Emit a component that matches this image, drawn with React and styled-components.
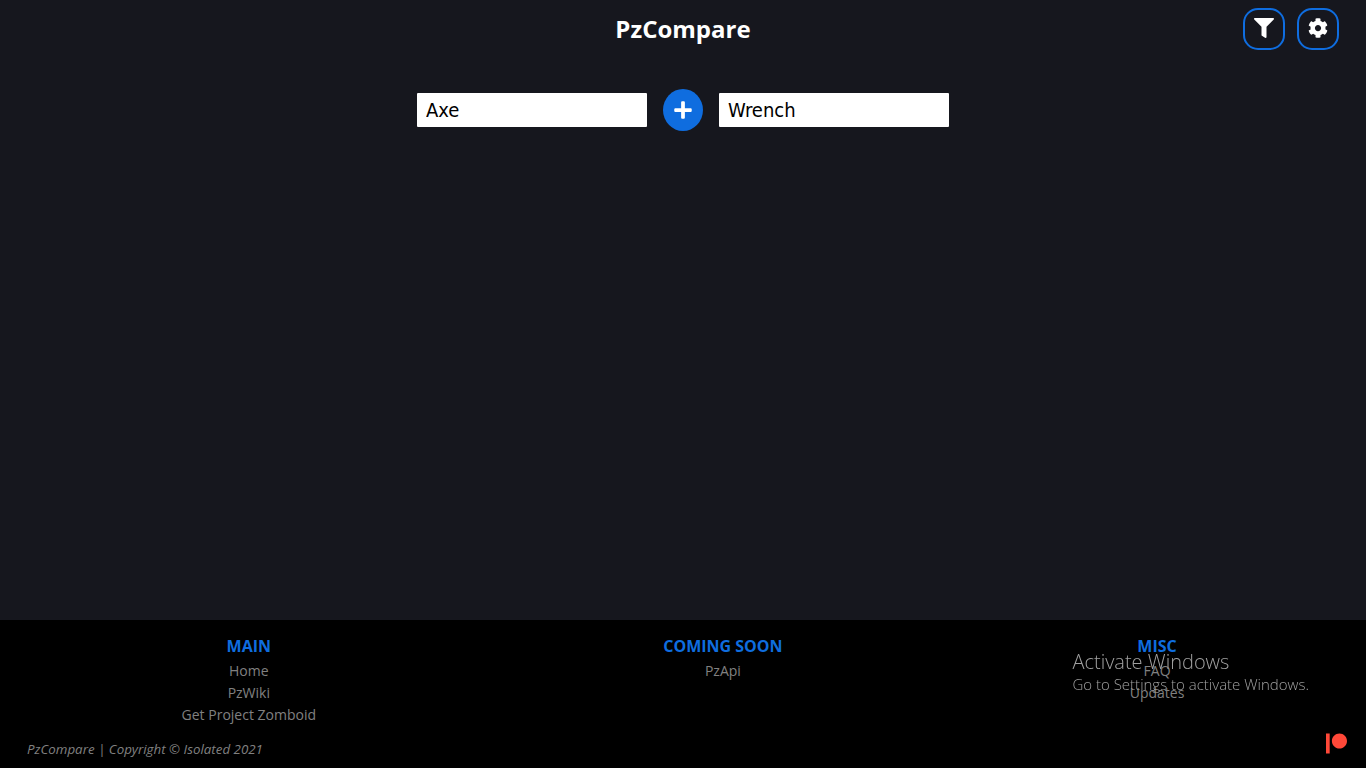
import React from "react";
import styled, { createGlobalStyle } from "styled-components";
import { FaFilter, FaCog, FaPlus, FaPatreon } from "react-icons/fa";

const GlobalStyle = createGlobalStyle`
  *, *::before, *::after { box-sizing: border-box; }
  body {
    margin: 0;
    background: #16171e;
    color: #fff;
    font-family: "Open Sans", "Noto Sans", sans-serif;
  }
`;

const Page = styled.div`
  min-height: 100vh;
  display: flex;
  flex-direction: column;
`;

const Header = styled.header`
  display: grid;
  grid-template-columns: 1fr auto 1fr;
  align-items: center;
  padding: 8px 27px;
`;

const Title = styled.h1`
  grid-column: 2;
  margin: 0;
  font-size: 24px;
  line-height: 34px;
  font-weight: 700;
`;

const Actions = styled.div`
  justify-self: end;
  display: flex;
  gap: 12px;
`;

const IconButton = styled.button`
  width: 42px;
  height: 42px;
  padding: 0 0 2px;
  display: flex;
  align-items: center;
  justify-content: center;
  border: 2px solid #0f6ddf;
  border-radius: 15px;
  background: transparent;
  color: #fff;
  font-size: 20px;
  cursor: pointer;
`;

const Main = styled.main`
  flex: 1;
  padding-top: 31px;
`;

const CompareForm = styled.form`
  display: flex;
  justify-content: center;
  align-items: center;
  gap: 16px;
`;

const ItemInput = styled.input`
  width: 230px;
  height: 34px;
  padding: 0 9px;
  border: 0;
  border-radius: 1px;
  background: #fff;
  color: #000;
  font-family: "DejaVu Sans Condensed", "Open Sans", sans-serif;
  font-size: 20px;
`;

const AddButton = styled.button`
  width: 40px;
  height: 42px;
  padding: 0;
  display: flex;
  align-items: center;
  justify-content: center;
  border: 0;
  border-radius: 50%;
  background: #0f6ddf;
  color: #fff;
  font-size: 20px;
  cursor: pointer;
`;

const Footer = styled.footer`
  background: #000;
  color: #808080;
  padding-top: 15px;
`;

const Columns = styled.div`
  display: flex;
  justify-content: space-around;
  padding: 0 8px;
`;

const Column = styled.nav`
  text-align: center;
`;

const ColumnTitle = styled.h2`
  margin: 0 0 3px;
  color: #0f6ddf;
  font-size: 16px;
  line-height: 22px;
  font-weight: 700;
  text-transform: uppercase;
`;

const LinkList = styled.ul`
  margin: 0;
  padding: 0;
  list-style: none;
  font-size: 14px;
  line-height: 22px;
`;

const FooterLink = styled.a`
  color: inherit;
  text-decoration: none;
`;

const FooterBar = styled.div`
  display: flex;
  justify-content: space-between;
  align-items: center;
  height: 42px;
  padding: 0 19px 0 27px;
`;

const Copyright = styled.small`
  padding-top: 4px;
  font-size: smaller;
  line-height: 18px;
  font-style: italic;
`;

const PatreonLink = styled.a`
  display: flex;
  padding-bottom: 8px;
  color: #ff4838;
  font-size: 21px;
`;

const Watermark = styled.aside`
  position: fixed;
  right: 57px;
  bottom: 74px;
  color: #a0a0a0;
  font-weight: 300;
  pointer-events: none;
`;

const WatermarkTitle = styled.div`
  font-size: 20px;
  line-height: 24px;
`;

const WatermarkText = styled.div`
  font-size: 15px;
  line-height: 20px;
`;

const columns = [
  { title: "Main", links: ["Home", "PzWiki", "Get Project Zomboid"] },
  { title: "Coming soon", links: ["PzApi"] },
  { title: "Misc", links: ["FAQ", "Updates"] },
];

export default function App() {
  return (
    <Page>
      <GlobalStyle />
      <Header>
        <Title>PzCompare</Title>
        <Actions>
          <IconButton type="button" aria-label="Filter"><FaFilter /></IconButton>
          <IconButton type="button" aria-label="Settings"><FaCog /></IconButton>
        </Actions>
      </Header>
      <Main>
        <CompareForm onSubmit={(e) => e.preventDefault()}>
          <ItemInput aria-label="First item" defaultValue="Axe" />
          <AddButton type="button" aria-label="Add item"><FaPlus /></AddButton>
          <ItemInput aria-label="Second item" defaultValue="Wrench" />
        </CompareForm>
      </Main>
      <Footer>
        <Columns>
          {columns.map(({ title, links }) => (
            <Column key={title} aria-label={title}>
              <ColumnTitle>{title}</ColumnTitle>
              <LinkList>
                {links.map((link) => (
                  <li key={link}><FooterLink href="#">{link}</FooterLink></li>
                ))}
              </LinkList>
            </Column>
          ))}
        </Columns>
        <FooterBar>
          <Copyright>PzCompare | Copyright © Isolated 2021</Copyright>
          <PatreonLink href="#" aria-label="Patreon"><FaPatreon /></PatreonLink>
        </FooterBar>
      </Footer>
      <Watermark>
        <WatermarkTitle>Activate Windows</WatermarkTitle>
        <WatermarkText>Go to Settings to activate Windows.</WatermarkText>
      </Watermark>
    </Page>
  );
}
